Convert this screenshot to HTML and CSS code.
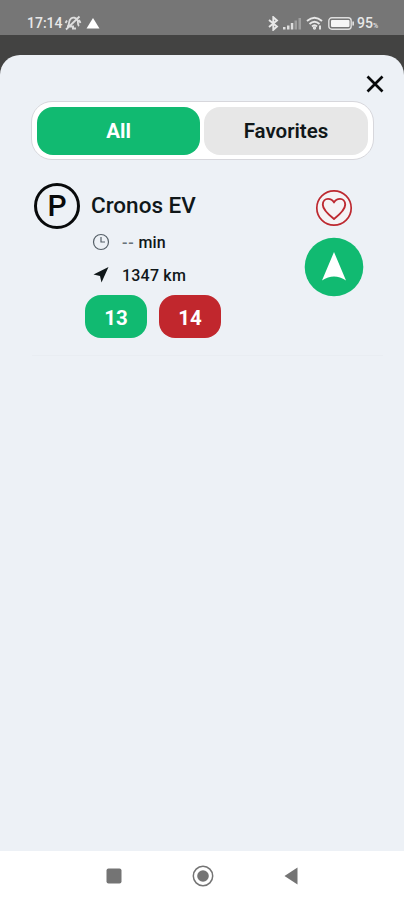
FILE: index.html
```html
<!DOCTYPE html>
<html lang="en">
<head>
<meta charset="utf-8">
<title>Cronos EV</title>
<link rel="stylesheet" href="styles.css">
</head>
<body>
<div class="phone">
  <header class="status">
    <span class="time">17:14</span>
    <svg class="mute" width="18" height="16" viewBox="0 0 18 16" fill="none" stroke="#dedede" stroke-width="1.800"><path d="M4 11C6 8 4 6 7 3.500C9 2 12 2.500 13.500 5C14.500 7 13 9 15 11M3 11.500H10M8 13.500h4M2 14.500L15.500 1.500M1.500 8L3 5.500M16.500 8L15 5"/></svg>
    <svg class="alert" width="14" height="11" viewBox="0 0 14 11"><path d="M7 0L13.500 10.500H.5Z" fill="#fff"/></svg>
    <svg class="bluetooth" width="11" height="15" viewBox="0 0 11 15" fill="none" stroke="#e8e8e8" stroke-width="1.900"><path d="M1 4L9 10.500L5.300 13.800V1.200L9 4.500L1 11"/></svg>
    <svg class="signal" width="19" height="13" viewBox="0 0 19 13" fill="#dedede"><path d="M0 10h2.500v2.500H0zM4 8.500h2.500v4H4zM7.800 6h2.500v6.500H7.800z"/><path d="M11.500 3.500H14v9h-2.500zM15.500 1H18v11.500h-2.500z" opacity=".4"/></svg>
    <svg class="wifi" width="18" height="14" viewBox="0 0 18 14" fill="none" stroke="#e8e8e8" stroke-width="1.900"><path d="M1 5Q8.500-1.500 16 5M3.500 8Q8.500 3.500 13.500 8M6 10.500Q8.500 8 11 10.500"/><circle cx="8.500" cy="12" r=".7"/><path d="M14 9.500v4"/></svg>
    <svg class="battery" width="27" height="13" viewBox="0 0 27 13"><rect x=".8" y=".8" width="22.400" height="11.400" rx="3" fill="none" stroke="#dedede" stroke-width="1.400"/><rect x="3" y="3" width="18.500" height="7" rx="1" fill="#f5f5f5"/><path d="M24.300 4.500h1.700v4h-1.700z" fill="#dedede"/></svg>
    <span class="charge">95<small>%</small></span>
  </header>
  <main class="sheet">
    <button class="close" aria-label="Close"><svg width="18" height="18" viewBox="0 0 18 18"><path d="M1.500 1.500l15 15M16.500 1.500l-15 15" stroke="#080a0b" stroke-width="2.700"/></svg></button>
    <nav class="tabs"><button class="tab active">All</button><button class="tab">Favorites</button></nav>
    <article class="station">
      <div class="parking">P</div>
      <section class="details">
        <h1>Cronos EV</h1>
        <div class="meta"><svg width="18" height="18" viewBox="0 0 18 18" fill="none" stroke="#566068"><circle cx="9" cy="9" r="7.500" stroke-width="1.200"/><path d="M9 4v5h4" stroke-width="1.200"/></svg><span><i>--</i> min</span></div>
        <div class="meta distance"><svg width="18" height="18" viewBox="0 0 18 18"><path d="M16.500 1L1.500 8.500L8 10L9.500 16.500Z" fill="#101719"/></svg><span>1347 km</span></div>
        <div class="badges"><span class="badge">13</span><span class="badge busy">14</span></div>
      </section>
      <aside class="actions">
        <button aria-label="Favorite"><svg width="38" height="38" viewBox="0 0 38 38" fill="none" stroke="#bd2930"><circle cx="19" cy="19" r="17.200" fill="#f5f3f5" stroke-width="1.700"/><path d="M19 30C14 26 7.800 21 7.800 15.700C7.800 11.900 10.300 9.900 13 9.900C15.700 9.900 17.800 11.300 19 13.400C20.200 11.300 22.300 9.900 25 9.900C27.700 9.900 30.200 11.900 30.200 15.700C30.200 21 24 26 19 30Z" stroke-width="1.900" stroke-linejoin="round"/></svg></button>
        <button aria-label="Navigate"><svg width="60" height="60" viewBox="0 0 60 60"><circle cx="30" cy="30" r="29.300" fill="#11ba71"/><path d="M30 15L42 43.500Q36 39.500 30 39.500Q24 39.500 18 43.500Z" fill="#fff"/></svg></button>
      </aside>
    </article>
  </main>
  <footer class="system">
    <svg width="16" height="16" viewBox="0 0 16 16"><rect x=".5" y=".5" width="15" height="15" rx="2" fill="#747474"/></svg>
    <svg width="22" height="22" viewBox="0 0 22 22"><circle cx="11" cy="11" r="9.700" fill="none" stroke="#747474" stroke-width="1.500"/><circle cx="11" cy="11" r="5.800" fill="#747474"/></svg>
    <svg width="14" height="18" viewBox="0 0 14 18"><path d="M13.500 .5V17.500L.5 9Z" fill="#747474"/></svg>
  </footer>
</div>
</body>
</html>
```
FILE: styles.css
```css
* { box-sizing: border-box; }
body { margin: 0; font-family: Roboto, sans-serif; color: #101719; background: #434342; }
button { border: 0; padding: 0; background: none; font: inherit; color: inherit; display: block; }
svg { display: block; flex: none; }
.phone { width: 404px; height: 900px; display: flex; flex-direction: column; background: #434342; overflow: hidden; }
.status { height: 35px; flex: none; background: #767676; color: #e8e8e8; display: flex; align-items: center; padding: 11px 0 0 27px; font-size: 14px; font-weight: 500; }
.time { width: 36px; }
.mute { margin-left: 1px; }
.alert { margin-left: 4px; }
.bluetooth { margin-left: 168px; }
.signal { margin-left: 4px; }
.wifi { margin-left: 4px; }
.battery { margin-left: 4px; }
.charge { margin-left: 2px; white-space: nowrap; }
.charge small { font-size: 7px; }
.sheet { flex: 1; margin-top: 20px; background: #edf1f6; border-radius: 20px 20px 0 0; }
.close { margin: 20px 20px 0 auto; width: 18px; height: 18px; }
.tabs { width: 343px; height: 59px; margin: 8px 0 0 31px; padding: 5px; display: grid; grid-template-columns: 163px 164px; gap: 4px; border: 1px solid #d7d7dc; border-radius: 21px; background: #fff; }
.tab { height: 48px; border-radius: 16px; background: #e7e7e7; font-size: 20.500px; font-weight: 600; }
.tab.active { background: #11ba71; color: #fff; font-weight: 700; }
.station { width: 351px; height: 196px; margin-left: 32px; display: flex; border-bottom: 1px solid #e9edf2; padding-top: 23px; }
.parking { width: 46px; height: 46px; margin-left: 2px; flex: none; border: 3.500px solid #080a0b; border-radius: 50%; display: grid; place-items: center; font-size: 30px; font-weight: 500; line-height: 1; color: #080a0b; }
.details { width: 224px; padding-left: 11px; }
h1 { margin: 7px 0 0; font-size: 22.500px; line-height: 30px; font-weight: 500; white-space: nowrap; }
.meta { height: 20px; margin-top: 12px; display: flex; align-items: center; gap: 12px; padding-left: 1px; font-size: 16px; font-weight: 500; letter-spacing: .2px; white-space: nowrap; }
.meta i { font-style: normal; color: #69737a; letter-spacing: .7px; }
.distance { margin-top: 13px; }
.badges { display: flex; gap: 12px; margin: 10px 0 0 -6px; }
.badge { width: 62px; height: 43px; border-radius: 16px; display: grid; place-items: center; background: #11ba71; color: #fff; font-size: 20.500px; font-weight: 700; padding-top: 2px; }
.busy { background: #c1272d; }
.actions { width: 60px; padding-top: 6px; display: flex; flex-direction: column; align-items: center; gap: 10px; }
.system { height: 49px; flex: none; background: #fff; display: grid; grid-template-columns: 16px 22px 14px; column-gap: 70px; align-items: center; padding: 1px 0 0 106px; }
```
